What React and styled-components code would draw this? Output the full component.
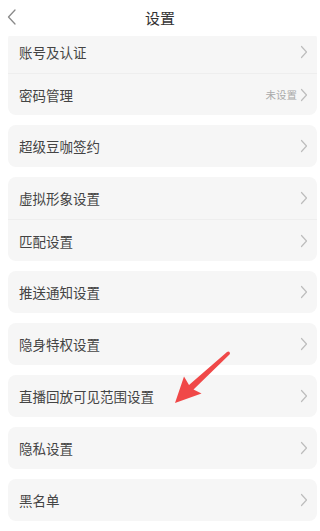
import React from "react";
import styled, { createGlobalStyle } from "styled-components";

const GlobalStyle = createGlobalStyle`
  html, body {
    margin: 0;
    padding: 0;
    background: #ffffff;
  }
  body {
    font-family: "Noto Sans CJK SC", "Noto Sans", sans-serif;
  }
`;

const groups = [
  [{ label: "账号及认证" }, { label: "密码管理", value: "未设置" }],
  [{ label: "超级豆咖签约" }],
  [{ label: "虚拟形象设置" }, { label: "匹配设置" }],
  [{ label: "推送通知设置" }],
  [{ label: "隐身特权设置" }],
  [{ label: "直播回放可见范围设置" }],
  [{ label: "隐私设置" }],
  [{ label: "黑名单" }],
  [{ label: "" }],
];

const Chevron = () => (
  <svg width="8" height="14" viewBox="0 0 8 14" fill="none">
    <path d="M1.5 1.5L6.5 7L1.5 12.5" stroke="#bdbdbd" strokeWidth="1.2" strokeLinecap="round" strokeLinejoin="round" />
  </svg>
);

const BackIcon = () => (
  <svg width="12" height="18" viewBox="0 0 12 18" fill="none">
    <path d="M9 2L2.5 9L9 16" stroke="#8a8a8a" strokeWidth="1.3" strokeLinecap="round" strokeLinejoin="round" />
  </svg>
);

const App = () => {
  return (
    <Page>
      <GlobalStyle />
      <Header>
        <BackButton>
          <BackIcon />
        </BackButton>
        <Title>设置</Title>
      </Header>
      <Viewport>
        <List>
          {groups.map((group, gi) => (
            <Card key={gi}>
              {group.map((item, i) => (
                <Row key={i} $divider={i > 0}>
                  <Label>{item.label}</Label>
                  <Right>
                    {item.value && <Value>{item.value}</Value>}
                    <Chevron />
                  </Right>
                </Row>
              ))}
            </Card>
          ))}
        </List>
        <Arrow width="62" height="60" viewBox="0 0 62 60">
          <path
            d="M57.5 4 Q58.5 5.5 57.5 6.5 L21.5 41.5 L29.5 45.5 L3 55 L12 28.5 L17 37 L55 4 Q56.5 3 57.5 4 Z"
            fill="#f04848"
          />
        </Arrow>
      </Viewport>
    </Page>
  );
};

const Page = styled.div`
  width: 320px;
  height: 531px;
  overflow: hidden;
  background: #ffffff;
`;

const Header = styled.div`
  height: 36px;
  display: flex;
  align-items: center;
  justify-content: center;
  position: relative;
  background: #ffffff;
`;

const BackButton = styled.div`
  position: absolute;
  left: 6px;
  top: 8px;
  display: flex;
`;

const Title = styled.div`
  font-size: 15px;
  color: #333333;
  margin-top: -2px;
`;

const Viewport = styled.div`
  position: relative;
  height: 495px;
  overflow: hidden;
`;

const List = styled.div`
  margin: -5px 3px 0 8px;
  display: flex;
  flex-direction: column;
  gap: 10px;
`;

const Card = styled.div`
  background: #f6f6f6;
  border-radius: 8px;
  overflow: hidden;
`;

const Row = styled.div`
  height: 42px;
  display: flex;
  align-items: center;
  justify-content: space-between;
  padding: 0 9px 0 11px;
  border-top: ${(p) => (p.$divider ? "1px solid #eeeeee" : "none")};
  box-sizing: border-box;
`;

const Label = styled.span`
  font-size: 13.5px;
  color: #444444;
`;

const Right = styled.div`
  display: flex;
  align-items: center;
  gap: 3px;
`;

const Value = styled.span`
  font-size: 10.5px;
  color: #aaaaaa;
`;

const Arrow = styled.svg`
  position: absolute;
  left: 172px;
  top: 312px;
`;

export default App;
